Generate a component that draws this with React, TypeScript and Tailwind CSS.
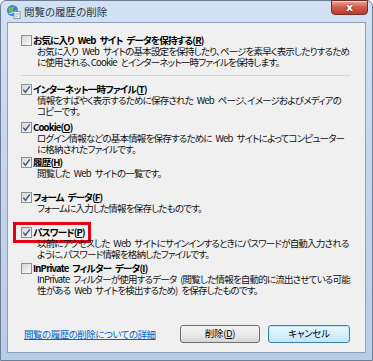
import React from "react";

const Check = ({ checked }: { checked: boolean }) => (
  <div className="w-[11px] h-[11px] shrink-0 border border-[#8e8f8f] bg-gradient-to-br from-[#d6d6d6] to-[#fbfbfb] flex items-center justify-center">
    {checked && (
      <svg width="9" height="9" viewBox="0 0 9 9">
        <path d="M1.3 4.6 L3.4 7.2 L7.8 1.4" stroke="#3c56a3" strokeWidth="1.5" fill="none" />
      </svg>
    )}
  </div>
);

type Item = { pre: string; key: string; checked: boolean; lines: string[]; h: string };

const Label = ({ pre, k }: { pre: string; k: string }) => (
  <span className="font-bold text-black whitespace-nowrap leading-[11px]">
    {pre}(<span className="underline">{k}</span>)
  </span>
);

const items: Item[] = [
  {
    pre: "インターネット一時ファイル",
    key: "T",
    checked: true,
    lines: ["情報をすばやく表示するために保存された Web ページ、イメージおよびメディアの", "コピーです。"],
    h: "h-[38px]",
  },
  {
    pre: "Cookie",
    key: "O",
    checked: true,
    lines: ["ログイン情報などの基本情報を保存するために Web サイトによってコンピューター", "に格納されたファイルです。"],
    h: "h-[35px]",
  },
  {
    pre: "履歴",
    key: "H",
    checked: true,
    lines: ["閲覧した Web サイトの一覧です。"],
    h: "h-[35px]",
  },
  {
    pre: "フォーム データ",
    key: "F",
    checked: true,
    lines: ["フォームに入力した情報を保存したものです。"],
    h: "h-[35px]",
  },
  {
    pre: "パスワード",
    key: "P",
    checked: true,
    lines: ["以前にアクセスした Web サイトにサインインするときにパスワードが自動入力される", "ように、パスワード情報を格納したファイルです。"],
    h: "h-[36px]",
  },
  {
    pre: "InPrivate フィルター データ",
    key: "I",
    checked: false,
    lines: ["InPrivate フィルターが使用するデータ (閲覧した情報を自動的に流出させている可能", "性がある Web サイトを検出するため) を保存したものです。"],
    h: "h-[35px]",
  },
];

const Desc = ({ lines }: { lines: string[] }) => (
  <div className="pl-[16px] text-[#111] leading-[11px] whitespace-nowrap">
    {lines.map((l, i) => (
      <div key={i}>{l}</div>
    ))}
  </div>
);

const TitleIcon = () => (
  <svg width="15" height="15" viewBox="0 0 15 15">
    <circle cx="6.5" cy="6.5" r="5.5" fill="#3b86d4" />
    <path d="M2 5 Q5 2 9 3 Q6 5 7 8 Q4 9 2 5Z" fill="#7fc241" />
    <path d="M3 9 Q6 10 10 7" stroke="#e6f2ff" strokeWidth="1.2" fill="none" />
    <rect x="8" y="7.5" width="6" height="7" fill="#fff" stroke="#6b7f99" strokeWidth="0.8" />
    <path d="M9.2 9.5 H12.8 M9.2 11 H12.8 M9.2 12.5 H12" stroke="#8aa0bd" strokeWidth="0.7" />
  </svg>
);

export default function App() {
  return (
    <div
      className="w-[373px] h-[361px] overflow-hidden bg-white text-[9.5px] tracking-[-0.8px] [word-spacing:2.5px] [font-feature-settings:'palt']"
      style={{ fontFamily: '"Noto Sans CJK JP", "Noto Sans", sans-serif' }}
    >
      <div className="w-full h-full flex flex-col rounded-t-[6px] border border-[#6d7f97] bg-gradient-to-b from-[#d2e2f3] via-[#c2d6ec] to-[#b8cde6]">
        {/* title bar */}
        <div className="h-[21px] shrink-0 flex items-start pl-[5px] pr-[4px]">
          <div className="mt-[3px]">
            <TitleIcon />
          </div>
          <div className="ml-[3px] mt-[3px] text-[10.5px] leading-[15px] text-[#2a3646] tracking-[0px]">閲覧の履歴の削除</div>
          <div className="flex-1" />
          <div className="w-[37px] h-[15px] -mt-px rounded-b-[4px] border border-[#6f2f28] bg-gradient-to-b from-[#e9a99c] via-[#cf5a4a] to-[#c23a2a] flex items-center justify-center shadow-[inset_0_1px_0_rgba(255,255,255,0.5)]">
            <span className="text-white font-bold text-[11px] leading-none tracking-normal [text-shadow:0_0_2px_#5a1a12]" style={{ fontFamily: '"DejaVu Sans", sans-serif' }}>
              x
            </span>
          </div>
        </div>
        {/* client */}
        <div className="flex-1 mx-[6px] mb-[7px] border border-[#8da0ba] bg-[#f0f0f0] flex flex-col pl-[13px] pr-[15px] pt-[12px] pb-[9px]">
          <div>
            <div className="flex items-center h-[11px] gap-[1px]">
              <Check checked={false} />
              <Label pre="お気に入り Web サイト データを保持する" k="R" />
            </div>
            <Desc lines={["お気に入り Web サイトの基本設定を保持したり、ページを素早く表示したりするため", "に使用される、Cookie とインターネット一時ファイルを保持します。"]} />
          </div>
          <div className="mt-[7px] h-px bg-[#d5d5d5]" />
          <div className="mt-[8px] flex flex-col">
            {items.map((it) => (
              <div key={it.key} className={it.h}>
                <div className="flex items-center h-[11px] gap-[1px]">
                  {it.key === "P" ? (
                    <div className="flex items-center gap-[1px] -ml-[8px] -my-[5px] pl-[5px] pr-[3px] py-[2px] border-[3px] border-[#e60012]">
                      <Check checked={it.checked} />
                      <Label pre={it.pre} k={it.key} />
                    </div>
                  ) : (
                    <>
                      <Check checked={it.checked} />
                      <Label pre={it.pre} k={it.key} />
                    </>
                  )}
                </div>
                <Desc lines={it.lines} />
              </div>
            ))}
          </div>
          <div className="flex-1" />
          <div className="flex items-center h-[18px]">
            <a className="ml-[3px] text-[#0066cc] underline text-[9.5px] tracking-[-0.5px]">閲覧の履歴の削除についての詳細</a>
            <div className="flex-1" />
            <button className="w-[80px] h-[18px] rounded-[3px] border border-[#707070] bg-gradient-to-b from-[#f3f3f3] via-[#ebebeb] to-[#d6d6d6] text-[9.5px] text-black leading-none tracking-[-0.3px]">
              削除(<span className="underline">D</span>)
            </button>
            <button className="ml-[8px] w-[82px] h-[18px] rounded-[3px] border border-[#3c7fb1] bg-gradient-to-b from-[#eaf6fd] via-[#d9f0fc] to-[#bee6fd] text-[9.5px] text-black leading-none tracking-[-0.3px] shadow-[inset_0_0_0_1px_#c0e8fb]">
              キャンセル
            </button>
          </div>
        </div>
      </div>
    </div>
  );
}
